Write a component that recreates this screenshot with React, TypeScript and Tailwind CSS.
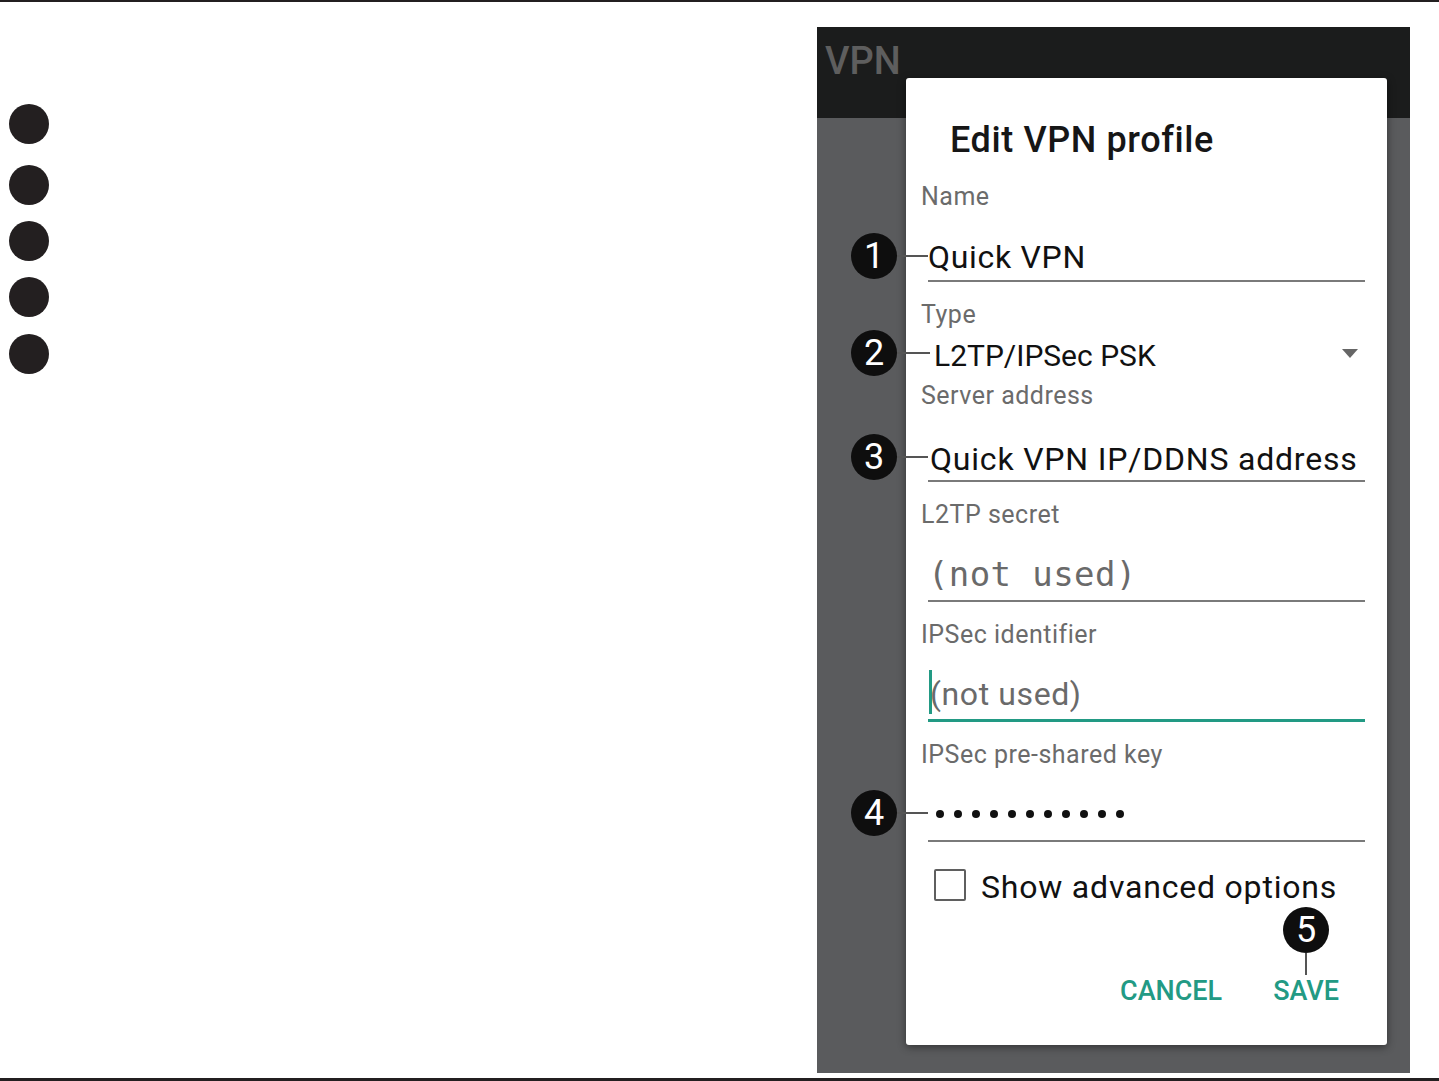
const steps = ["mt-[102px]", "mt-[21px]", "mt-[16px]", "mt-[16px]", "mt-[17px]"];

function Badge({ n, top, line }: { n: string; top: string; line: string }) {
  return (
    <div className={`absolute right-full flex items-center ${top}`}>
      <div className="flex h-[46px] w-[46px] items-center justify-center rounded-full bg-[#0e0e0e] text-[36px] leading-none tracking-normal text-white">
        {n}
      </div>
      <div className={`h-[2px] bg-[#555] ${line}`} />
    </div>
  );
}

function Label({ children, mt }: { children: React.ReactNode; mt: string }) {
  return (
    <div className={`h-[30px] text-[25px] leading-[30px] tracking-[0.5px] text-[#6b6b6b] ${mt}`}>{children}</div>
  );
}

export default function App() {
  return (
    <div className="flex h-[1081px] w-[1439px] flex-col bg-white font-['Roboto',sans-serif]">
      <div className="h-[2px] bg-[#231f20]" />

      <div className="flex h-[1076px]">
        {/* numbered legend */}
        <div className="flex flex-col pl-[9px]">
          {steps.map((m, i) => (
            <div key={i} className={`h-[40px] w-[40px] rounded-full bg-[#231f20] ${m}`} />
          ))}
        </div>

        {/* phone screenshot */}
        <div className="relative ml-auto mr-[29px] mt-[25px] h-[1046px] w-[593px] bg-[#5a5b5d]">
          <div className="h-[91px] bg-[#1b1c1c] pl-[8px] pt-[12px] text-[38px] font-medium leading-[44px] text-[#5e5e5e]">
            VPN
          </div>

          <div className="absolute left-[89px] top-[51px] h-[967px] w-[481px] rounded-[3px] bg-white px-[15px] pt-[42px] shadow-[0_2px_8px_rgba(0,0,0,0.45)]">
            <div className="ml-[29px] h-[40px] text-[36px] font-medium leading-[40px] tracking-[0.6px] text-[#161616]">
              Edit VPN profile
            </div>

            <Label mt="mt-[22px]">Name</Label>
            <div className="ml-[7px] mr-[7px] border-b-2 border-[#7a7a7a] pt-[25px]">
              <div className="relative h-[43px] text-[32px] leading-[40px] tracking-[0.7px] text-[#111]">
                <Badge n="1" top="top-[-4px]" line="w-[31px]" />
                Quick VPN
              </div>
            </div>

            <Label mt="mt-[18px]">Type</Label>
            <div className="relative ml-[13px] mt-[8px] flex h-[36px] justify-between">
              <Badge n="2" top="top-[-8px]" line="w-[33px] mr-[4px]" />
              <span className="text-[30px] leading-[36px] text-[#111]">L2TP/IPSec PSK</span>
              <svg className="mr-[14px] mt-[11px]" width="16" height="9" viewBox="0 0 16 9">
                <path d="M0 0h16L8 9z" fill="#666" />
              </svg>
            </div>

            <Label mt="mt-[7px]">Server address</Label>
            <div className="ml-[7px] mr-[7px] border-b-2 border-[#7a7a7a] pt-[28px]">
              <div className="relative h-[41px] pl-[2px] text-[32px] leading-[40px] tracking-[0.8px] text-[#111]">
                <Badge n="3" top="top-[-5px]" line="w-[31px]" />
                Quick VPN IP/DDNS address
              </div>
            </div>

            <Label mt="mt-[18px]">L2TP secret</Label>
            <div className="ml-[7px] mr-[7px] border-b-2 border-[#7a7a7a] pt-[24px]">
              <div className="h-[46px] font-['DejaVu_Sans_Mono',monospace] text-[34px] leading-[40px] tracking-[0.4px] text-[#6a6a6a]">
                (not used)
              </div>
            </div>

            <Label mt="mt-[18px]">IPSec identifier</Label>
            <div className="ml-[7px] mr-[7px] border-b-[3px] border-[#229a84] pt-[20px]">
              <div className="flex h-[49px] items-start">
                <span className="ml-[1px] h-[44px] w-[3px] bg-[#229a84]" />
                <span className="-ml-[2px] mt-[4px] text-[32px] leading-[40px] tracking-[0.6px] text-[#6a6a6a]">
                  (not used)
                </span>
              </div>
            </div>

            <Label mt="mt-[18px]">IPSec pre-shared key</Label>
            <div className="ml-[7px] mr-[7px] border-b-2 border-[#7a7a7a] pb-[23px] pt-[40px]">
              <div className="relative flex h-[7px] gap-[10px] pl-[8px]">
                <Badge n="4" top="top-[-20px]" line="w-[31px]" />
                {Array.from({ length: 11 }).map((_, i) => (
                  <span key={i} className="h-[8px] w-[8px] rounded-full bg-[#111]" />
                ))}
              </div>
            </div>

            <div className="ml-[13px] mt-[25px] flex h-[40px] items-start">
              <span className="mt-[2px] h-[32px] w-[32px] rounded-[2px] border-2 border-[#5f5f5f]" />
              <span className="ml-[15px] text-[32px] leading-[40px] tracking-[0.8px] text-[#111]">
                Show advanced options
              </span>
            </div>

            <div className="mr-[33px] mt-[68px] flex justify-end gap-[51px] text-[27px] font-medium leading-[32px] text-[#229a84]">
              <span>CANCEL</span>
              <span className="relative">
                SAVE
                <div className="absolute bottom-full left-1/2 flex -translate-x-1/2 flex-col items-center">
                  <div className="flex h-[46px] w-[46px] items-center justify-center rounded-full bg-[#0e0e0e] text-[36px] font-normal leading-none text-white">
                    5
                  </div>
                  <div className="h-[22px] w-[2px] bg-[#555]" />
                </div>
              </span>
            </div>
          </div>
        </div>
      </div>

      <div className="h-[3px] bg-[#231f20]" />
    </div>
  );
}
